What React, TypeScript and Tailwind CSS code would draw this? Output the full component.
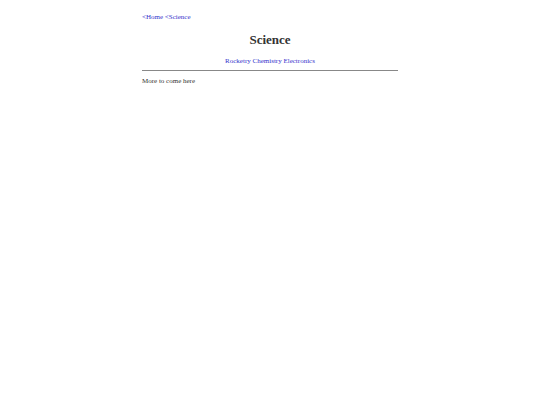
import React from 'react';

export default function App() {
  return (
    <div className="min-h-[405px] bg-white font-['Liberation_Serif',serif] text-[#333]">
      <div className="mx-auto w-[256px] pt-[13px]">
        <nav className="text-[7px] leading-[9px]">
          <a href="#" className="text-[#3333cc]">&lt;Home</a>{' '}
          <a href="#" className="text-[#3333cc]">&lt;Science</a>
        </nav>
        <h1 className="mt-[10px] text-center text-[13px] font-bold leading-[16px]">Science</h1>
        <div className="mt-[9px] text-center text-[7px] leading-[9px]">
          <a href="#" className="text-[#3333cc]">Rocketry</a>{' '}
          <a href="#" className="text-[#3333cc]">Chemistry</a>{' '}
          <a href="#" className="text-[#3333cc]">Electronics</a>
        </div>
        <hr className="mt-[4px] border-t border-[#888]" />
        <p className="mt-[6px] text-[7px] leading-[9px]">More to come here</p>
      </div>
    </div>
  );
}
